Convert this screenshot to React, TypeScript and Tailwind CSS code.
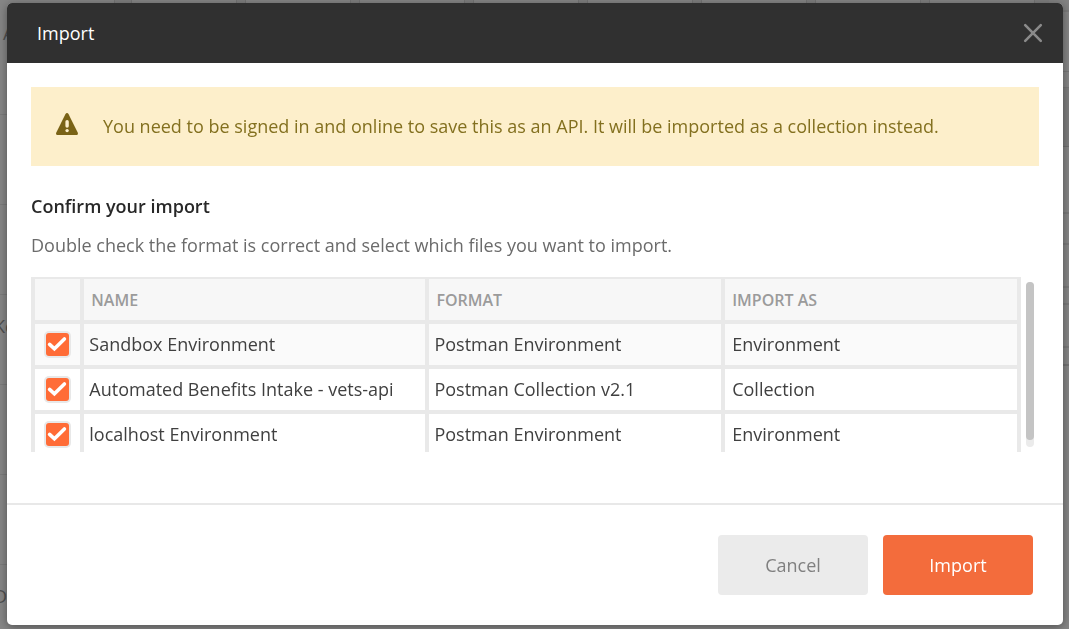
import { useState } from "react";

type Row = { name: string; format: string; importAs: string };

const rows: Row[] = [
  { name: "Sandbox Environment", format: "Postman Environment", importAs: "Environment" },
  { name: "Automated Benefits Intake - vets-api", format: "Postman Collection v2.1", importAs: "Collection" },
  { name: "localhost Environment", format: "Postman Environment", importAs: "Environment" },
];

const sidebarRows = ["", "", "Ke", "", "", "D"];
const tabs = [1, 2, 3, 4, 5, 6, 7, 8];

function Checkbox({ label }: { label: string }) {
  const [checked, setChecked] = useState(true);
  return (
    <label className="mx-auto grid size-[27px] cursor-pointer place-items-center rounded-[5px] bg-[#e8e8e8]">
      <input
        type="checkbox"
        aria-label={label}
        checked={checked}
        onChange={(e) => setChecked(e.target.checked)}
        className="col-start-1 row-start-1 size-[23px] appearance-none rounded-[3px] bg-white checked:bg-[#ff6c37]"
      />
      {checked && (
        <svg
          viewBox="0 0 23 23"
          className="pointer-events-none col-start-1 row-start-1 size-[23px]"
          fill="none"
          stroke="white"
          strokeWidth="3.6"
          strokeLinecap="round"
        >
          <path d="M3.6 11.4 L8.4 15.8 L18.4 6" />
        </svg>
      )}
    </label>
  );
}

// The dimmed workspace that shows round the edges of the dialog.
function Backdrop() {
  return (
    <div aria-hidden="true" className="fixed inset-0 flex justify-between overflow-hidden bg-[#868686]">
      <div className="flex w-[114px] shrink-0 flex-col text-[#505050]">
        <div className="h-[115px] shrink-0 border-b border-[#7b7b7b] pt-[21px] pl-[3px]">A</div>
        {sidebarRows.map((letter, i) => (
          <div key={i} className="-ml-1.5 h-[90px] shrink-0 border-b border-[#7b7b7b] pt-[19px]">
            {letter}
          </div>
        ))}
      </div>
      <div className="flex h-2.5 flex-1 gap-2 overflow-hidden border-l border-[#747474] bg-[#7f7f7f] pl-4">
        {tabs.map((tab) => (
          <div key={tab} className="w-[106px] shrink-0 border-x border-[#747474] bg-[#868686]" />
        ))}
      </div>
      <div className="flex w-5 shrink-0 flex-col">
        <div className="h-3 border-b-2 border-[#7b7b7b] bg-[#828282]" />
        <div className="h-[60px] border-b border-[#777777]" />
        <div className="h-4 border-b border-[#777777]" />
        <div className="h-[59px] border-b border-[#707070] bg-[#7e7e7e]" />
        <div className="h-[67px] border-b-2 border-[#7b7b7b]" />
        <div className="h-[31px] border-b-2 border-[#7b7b7b]" />
        <div className="h-[43px] border-b-2 border-[#7b7b7b]" />
        <div className="h-[17px] border-b-2 border-[#7b7b7b]" />
        <div className="h-[43px] border-b-2 border-[#7b7b7b]" />
        <div className="h-[18px] border-b-2 border-[#747474]" />
      </div>
    </div>
  );
}

export default function App() {
  return (
    <div className="min-h-screen pt-[3px] pr-1.5 pb-1 pl-[7px] font-['Open_Sans',sans-serif] text-lg leading-6">
      <Backdrop />
      <div
        role="dialog"
        aria-labelledby="title"
        className="relative flex min-h-[calc(100vh-7px)] flex-col overflow-hidden rounded-[5px] bg-white shadow-[0_2px_10px_rgba(0,0,0,0.4)]"
      >
        <header className="flex h-[60px] items-center justify-between bg-[#303030] pr-5 pl-[30px]">
          <h1 id="title" className="text-white">Import</h1>
          <button type="button" aria-label="Close" className="text-[#8a8a8a]">
            <svg viewBox="0 0 20 20" className="size-5" fill="none" stroke="currentColor" strokeWidth="2.6" strokeLinecap="round">
              <path d="M2.2 2.2 L17.8 17.8 M17.8 2.2 L2.2 17.8" />
            </svg>
          </button>
        </header>

        <main className="flex-1 px-6 pt-6">
          <div role="alert" className="flex h-[79px] items-start gap-6 bg-[#fdefcb] px-6 pt-[26px] text-[#83701f]">
            <svg viewBox="0 0 24 24" className="size-6 shrink-0">
              <path d="M12 0 Q13 0 13.6 1.2 L22.7 19.6 Q23.6 22 21.6 22 H2.4 Q0.4 22 1.3 19.6 L10.4 1.2 Q11 0 12 0Z" fill="#7a6316" />
              <rect x="10.4" y="7" width="3.4" height="7.8" rx="1.7" fill="#fdefcb" />
              <circle cx="12.1" cy="17.6" r="1.7" fill="#fdefcb" />
            </svg>
            <p className="leading-[26px]">
              You need to be signed in and online to save this as an API. It will be imported as a collection instead.
            </p>
          </div>

          <h2 className="mt-7 font-semibold text-[#282828]">Confirm your import</h2>
          <p className="mt-[15px] text-[#6b6b6b]">
            Double check the format is correct and select which files you want to import.
          </p>

          <div className="mt-5 flex h-[175px] gap-[5px] overflow-hidden pr-[5px]">
            <div className="min-w-0 flex-1">
              <table className="w-full table-fixed border-separate border-spacing-0 border-x-2 border-[#e9e9e9] text-left">
                <colgroup>
                  <col className="w-[49px]" />
                  <col className="w-[35%]" />
                  <col className="w-[30%]" />
                  <col className="w-[30%]" />
                </colgroup>
                <thead>
                  <tr className="h-[45px] bg-[#f7f7f7] text-base text-[#9b9b9b]">
                    <td className="border-2 border-[#e9e9e9]" />
                    <th className="border-2 border-[#e9e9e9] py-0 pl-[7px] font-semibold">NAME</th>
                    <th className="border-2 border-[#e9e9e9] py-0 pl-[7px] font-semibold">FORMAT</th>
                    <th className="border-2 border-[#e9e9e9] py-0 pl-[7px] font-semibold">IMPORT AS</th>
                  </tr>
                </thead>
                <tbody>
                  {rows.map((r) => (
                    <tr key={r.name} className="h-[45px] text-[#404040] first:bg-[#fafafa]">
                      <td className="border-2 border-[#e9e9e9] p-0"><Checkbox label={r.name} /></td>
                      <td className="border-2 border-[#e9e9e9] pt-0 pb-0.5 pl-[5px]">{r.name}</td>
                      <td className="border-2 border-[#e9e9e9] pt-0 pb-0.5 pl-[5px]">{r.format}</td>
                      <td className="border-2 border-[#e9e9e9] pt-0 pb-0.5 pl-[7px]">{r.importAs}</td>
                    </tr>
                  ))}
                </tbody>
              </table>
            </div>
            <div aria-hidden="true" className="my-[5px] w-2 rounded-full bg-[#ebebeb]">
              <div className="h-[158px] rounded-full bg-[#c4c4c4]" />
            </div>
          </div>
        </main>

        <footer className="flex h-[122px] items-center justify-end gap-[15px] border-t-2 border-[#e8e8e8] px-[30px]">
          <button type="button" className="h-[60px] w-[150px] rounded-[4px] bg-[#ebebeb] text-[#808080]">Cancel</button>
          <button type="button" className="h-[60px] w-[150px] rounded-[4px] bg-[#f36c3c] text-white">Import</button>
        </footer>
      </div>
    </div>
  );
}
